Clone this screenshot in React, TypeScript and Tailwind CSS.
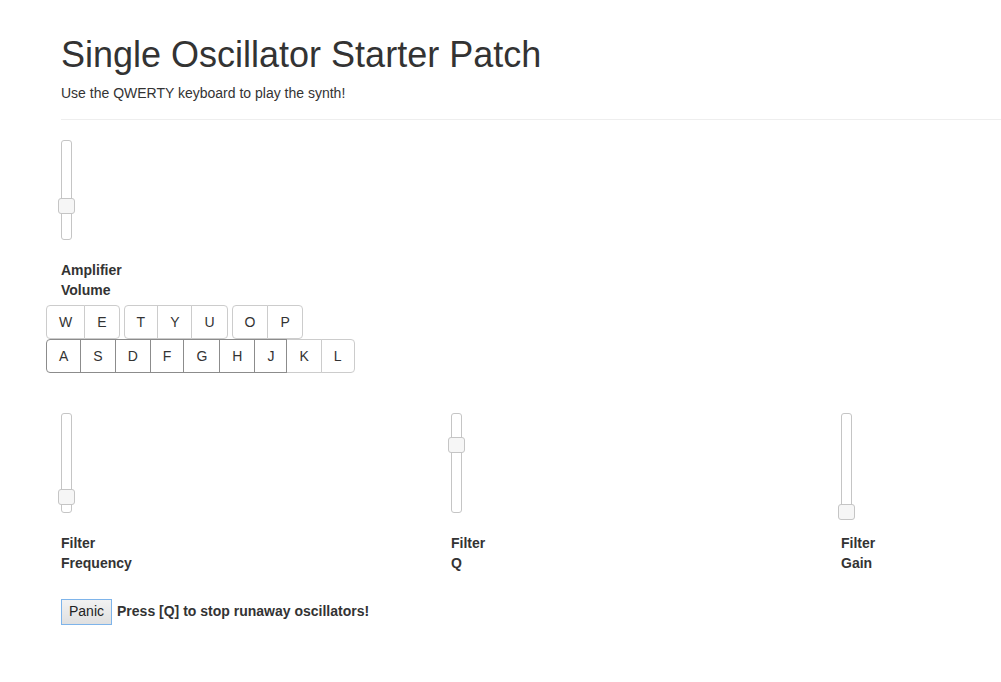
import React from "react"

type Key = { k: string; dark?: boolean }

const rowTop: Key[][] = [
  [{ k: "W" }, { k: "E" }],
  [{ k: "T" }, { k: "Y" }, { k: "U" }],
  [{ k: "O" }, { k: "P" }],
]

const rowBottom: Key[] = [
  { k: "A", dark: true },
  { k: "S", dark: true },
  { k: "D", dark: true },
  { k: "F", dark: true },
  { k: "G", dark: true },
  { k: "H", dark: true },
  { k: "J", dark: true },
  { k: "K" },
  { k: "L" },
]

function KeyGroup({ keys }: { keys: Key[] }) {
  return (
    <div className="flex">
      {keys.map((key, i) => (
        <button
          key={key.k}
          className={
            "h-[34px] px-3 border bg-white text-[14px] leading-5 text-[#333] " +
            (i > 0 ? "-ml-px " : "") +
            (i === 0 ? "rounded-l " : "") +
            (i === keys.length - 1 ? "rounded-r " : "") +
            (key.dark ? "relative z-10 border-[#8c8c8c]" : "border-[#ccc]")
          }
        >
          {key.k}
        </button>
      ))}
    </div>
  )
}

// vertical slider, offset = handle bottom in px from track bottom
function VSlider({ offset }: { offset: number }) {
  return (
    <div className="relative w-[11px] h-[100px] border border-[#c5c5c5] rounded-[3px] bg-white">
      <div
        className="absolute left-[-4px] w-[17px] h-[16px] border border-[#c5c5c5] rounded-[3px] bg-[#f6f6f6]"
        style={{ bottom: offset }}
      />
    </div>
  )
}

function Control({ offset, a, b }: { offset: number; a: string; b: string }) {
  return (
    <div>
      <VSlider offset={offset} />
      <div className="mt-5 font-bold leading-5">
        <div>{a}</div>
        <div>{b}</div>
      </div>
    </div>
  )
}

export default function App() {
  return (
    <div className="min-h-[682px] w-full overflow-hidden bg-white text-[14px] text-[#333] font-['Liberation_Sans',Arial,sans-serif]">
      <div className="pl-[61px] w-[1201px]">
        {/* header */}
        <div className="border-b border-[#eee] pb-[16px]">
          <h1 className="mt-[35px] text-[36px] leading-[39.6px] font-normal">Single Oscillator Starter Patch</h1>
          <p className="mt-[8px] leading-5">Use the QWERTY keyboard to play the synth!</p>
        </div>

        <div className="mt-5">
          <Control offset={25} a="Amplifier" b="Volume" />
        </div>

        {/* keyboard */}
        <div className="mt-[5px] -ml-[15px]">
          <div className="flex gap-1">
            {rowTop.map((g, i) => (
              <KeyGroup key={i} keys={g} />
            ))}
          </div>
          <KeyGroup keys={rowBottom} />
        </div>

        {/* filters */}
        <div className="mt-10 grid grid-cols-[390px_390px_390px]">
          <Control offset={7} a="Filter" b="Frequency" />
          <Control offset={59} a="Filter" b="Q" />
          <Control offset={-8} a="Filter" b="Gain" />
        </div>

        <div className="mt-[26px] flex items-center">
          <button className="h-[26px] px-[7px] border border-[#7eb4ea] bg-gradient-to-b from-[#f2f2f2] to-[#e0e0e0] text-[14px] text-[#222]">
            Panic
          </button>
          <span className="ml-[5px] font-bold">Press [Q] to stop runaway oscillators!</span>
        </div>
      </div>
    </div>
  )
}
